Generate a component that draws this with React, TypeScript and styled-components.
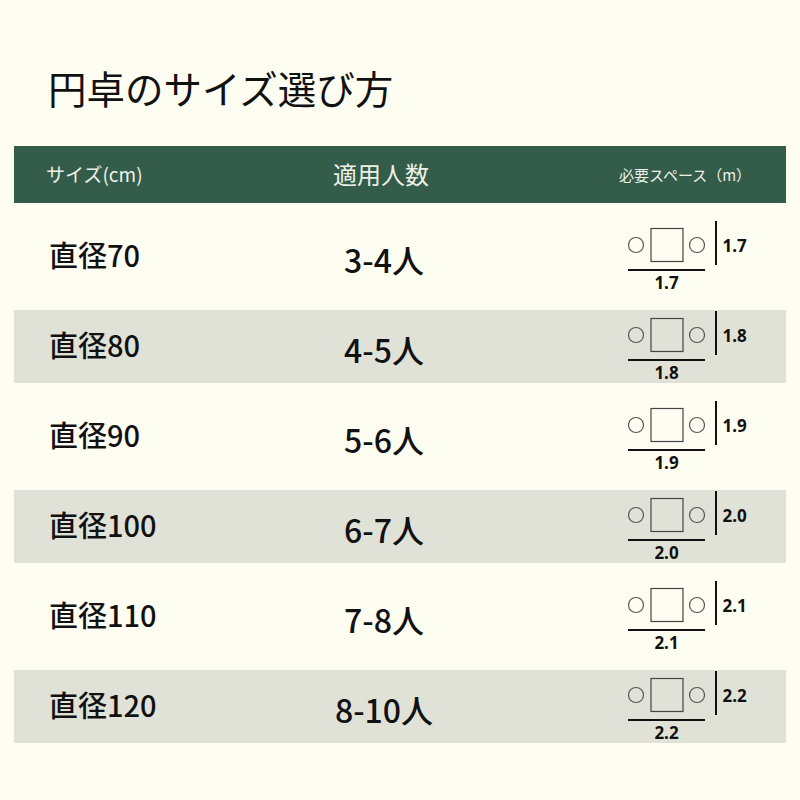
import React from "react";
import styled, { createGlobalStyle } from "styled-components";

const GlobalStyle = createGlobalStyle`
  html, body {
    margin: 0;
    padding: 0;
    background: #fefdf2;
  }
  body {
    font-family: "Noto Sans CJK JP", "Noto Sans", sans-serif;
    color: #111111;
  }
`;

const Page = styled.div`
  width: 800px;
  height: 800px;
  background: #fefdf2;
  padding: 68px 14px 0;
  box-sizing: border-box;
`;

const Title = styled.h1`
  margin: 0 0 40px 34px;
  font-size: 38.5px;
  line-height: 38px;
  font-weight: 400;
  color: #111111;
`;

const Table = styled.div`
  display: flex;
  flex-direction: column;
`;

const HeaderRow = styled.div`
  display: grid;
  grid-template-columns: 230px 274px 1fr;
  align-items: center;
  height: 57px;
  background: #335c4a;
  color: #eef0e6;
`;

const HeadCell = styled.div<{ $size: number; $align?: string; $pad?: number }>`
  font-size: ${(p) => p.$size}px;
  line-height: 1.2;
  text-align: ${(p) => p.$align || "left"};
  padding-left: ${(p) => p.$pad || 0}px;
`;

const Row = styled.div<{ $shaded: boolean }>`
  display: grid;
  grid-template-columns: 230px 274px 1fr;
  align-items: center;
  height: ${(p) => (p.$shaded ? 73 : 107)}px;
  background: ${(p) => (p.$shaded ? "#e1e2d7" : "transparent")};
`;

const SizeCell = styled.div`
  padding-left: 35px;
  font-size: 29px;
  font-weight: 500;
  line-height: 1;
  margin-top: -4px;
`;

const PeopleCell = styled.div`
  text-align: center;
  font-size: 32px;
  font-weight: 500;
  line-height: 1;
  margin-top: 4px;
  padding-left: 6px;
`;

const SpaceCell = styled.div`
  padding-left: 110px;
  display: flex;
  align-items: center;
`;

const Diagram = styled.div`
  display: flex;
  flex-direction: column;
`;

const DiagramTop = styled.div`
  display: flex;
  align-items: center;
`;

const VLine = styled.div`
  width: 1.5px;
  height: 44px;
  background: #111111;
  margin-left: 10px;
`;

const SideLabel = styled.span`
  font-family: "Noto Sans", "Noto Sans CJK JP", sans-serif;
  font-weight: 700;
  font-size: 17px;
  line-height: 18px;
  margin-left: 6px;
  margin-top: 6px;
`;

const DiagramBottom = styled.div`
  width: 77px;
  display: flex;
  flex-direction: column;
  align-items: center;
  margin-top: 4px;
`;

const HLine = styled.div`
  width: 77px;
  height: 1.5px;
  background: #111111;
`;

const BottomLabel = styled.span`
  font-family: "Noto Sans", "Noto Sans CJK JP", sans-serif;
  font-weight: 700;
  font-size: 17px;
  line-height: 18px;
  margin-top: 3px;
`;

const Shapes = () => (
  <svg width="77" height="44" viewBox="0 0 77 44">
    <circle cx="8" cy="24" r="7.5" fill="none" stroke="#555" strokeWidth="1.2" />
    <rect x="23" y="7.5" width="32" height="33" fill="none" stroke="#444" strokeWidth="1.2" />
    <circle cx="69" cy="24" r="7.5" fill="none" stroke="#555" strokeWidth="1.2" />
  </svg>
);

const rows = [
  { size: "直径70", people: "3-4人", space: "1.7" },
  { size: "直径80", people: "4-5人", space: "1.8" },
  { size: "直径90", people: "5-6人", space: "1.9" },
  { size: "直径100", people: "6-7人", space: "2.0" },
  { size: "直径110", people: "7-8人", space: "2.1" },
  { size: "直径120", people: "8-10人", space: "2.2" },
];

export default function App() {
  return (
    <>
      <GlobalStyle />
      <Page>
        <Title>円卓のサイズ選び方</Title>
        <Table>
          <HeaderRow>
            <HeadCell $size={19} $pad={32}>
              サイズ(cm)
            </HeadCell>
            <HeadCell $size={24} $align="center">
              適用人数
            </HeadCell>
            <HeadCell $size={15} $pad={101}>
              必要スペース（m）
            </HeadCell>
          </HeaderRow>
          {rows.map((r, i) => (
            <Row key={r.size} $shaded={i % 2 === 1}>
              <SizeCell>{r.size}</SizeCell>
              <PeopleCell>{r.people}</PeopleCell>
              <SpaceCell>
                <Diagram>
                  <DiagramTop>
                    <Shapes />
                    <VLine />
                    <SideLabel>{r.space}</SideLabel>
                  </DiagramTop>
                  <DiagramBottom>
                    <HLine />
                    <BottomLabel>{r.space}</BottomLabel>
                  </DiagramBottom>
                </Diagram>
              </SpaceCell>
            </Row>
          ))}
        </Table>
      </Page>
    </>
  );
}
